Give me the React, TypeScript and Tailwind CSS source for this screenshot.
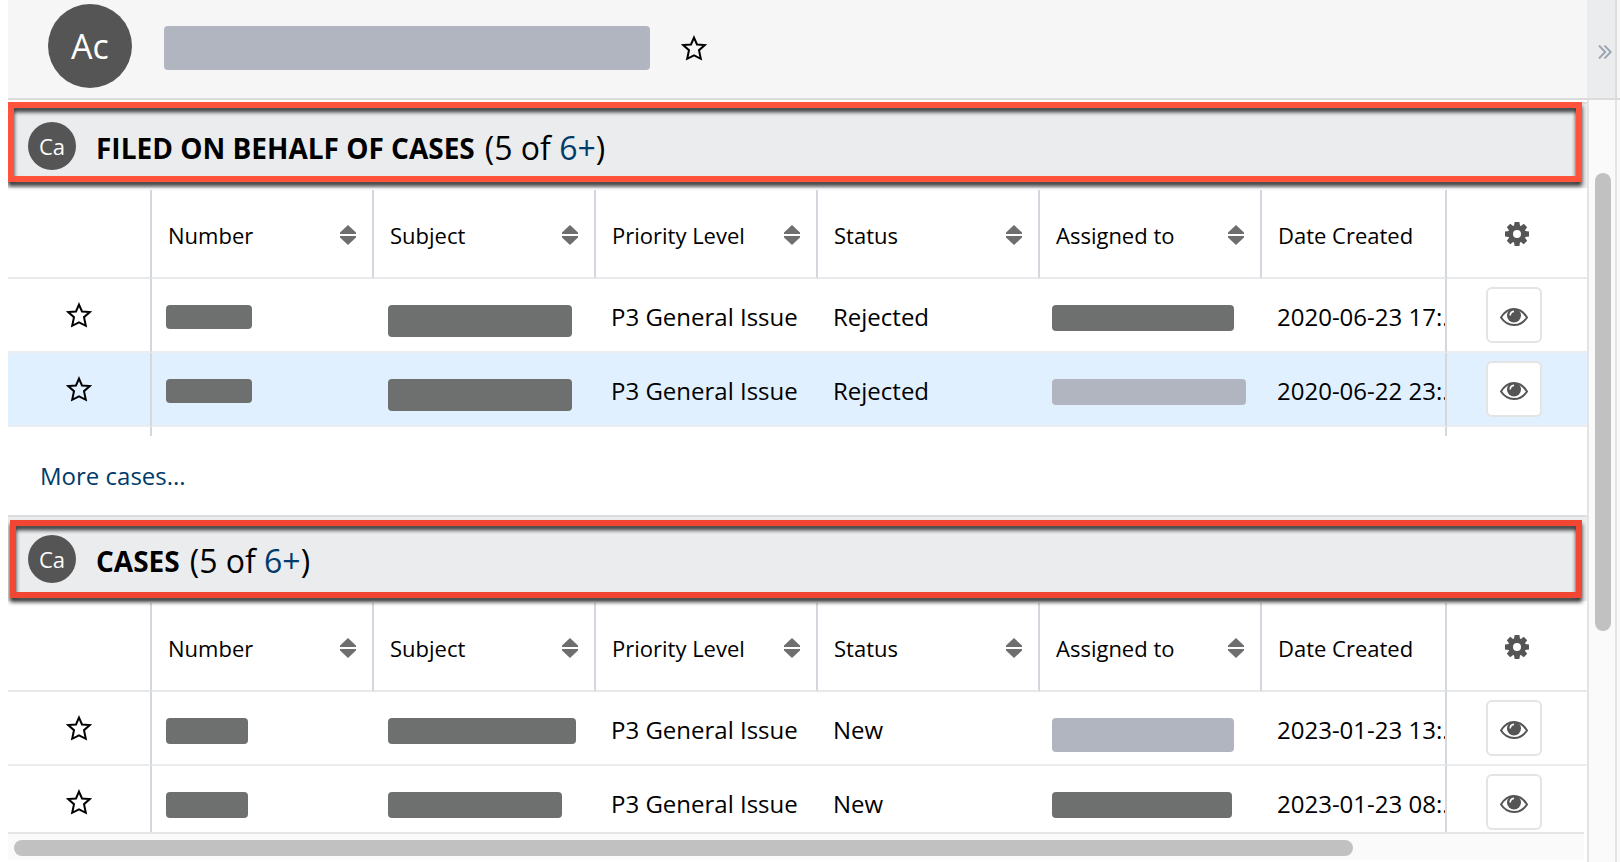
import { useState } from "react";

type Bar = { size: string; light?: boolean };

type CaseRow = {
  id: string;
  number: Bar;
  subject: Bar;
  priority: string;
  status: string;
  assigned: Bar;
  created: string;
  active?: boolean;
};

const filedCases: CaseRow[] = [
  {
    id: "filed-1",
    number: { size: "w-[86px] h-6" },
    subject: { size: "w-[184px] h-8" },
    priority: "P3 General Issue",
    status: "Rejected",
    assigned: { size: "w-[182px] h-[26px]" },
    created: "2020-06-23 17:...",
  },
  {
    id: "filed-2",
    number: { size: "w-[86px] h-6" },
    subject: { size: "w-[184px] h-8" },
    priority: "P3 General Issue",
    status: "Rejected",
    assigned: { size: "w-[194px] h-[26px]", light: true },
    created: "2020-06-22 23:...",
    active: true,
  },
];

const cases: CaseRow[] = [
  {
    id: "case-1",
    number: { size: "w-[82px] h-[26px]" },
    subject: { size: "w-[188px] h-[26px]" },
    priority: "P3 General Issue",
    status: "New",
    assigned: { size: "w-[182px] h-[34px]", light: true },
    created: "2023-01-23 13:...",
  },
  {
    id: "case-2",
    number: { size: "w-[82px] h-[26px]" },
    subject: { size: "w-[174px] h-[26px]" },
    priority: "P3 General Issue",
    status: "New",
    assigned: { size: "w-[180px] h-[26px]" },
    created: "2023-01-23 08:...",
  },
];

const sortableColumns = ["Number", "Subject", "Priority Level", "Status", "Assigned to"];

function Star() {
  return (
    <svg className="h-[26px] w-[26px]" viewBox="0 0 26 26" fill="none" stroke="currentColor" strokeWidth="2">
      <path d="M13 2.6 16 9.5 23.8 10.1 18 15.2 19.8 23.8 13 20.4 6.2 23.8 8 15.2 2.2 10.1 10 9.5Z" />
    </svg>
  );
}

function StarButton() {
  const [on, setOn] = useState(false);
  return (
    <button type="button" aria-label="Favorite" aria-pressed={on} onClick={() => setOn(!on)} className="block">
      <Star />
    </button>
  );
}

function SortIcon() {
  return (
    <svg className="h-5 w-4 shrink-0" viewBox="0 0 16 20" fill="#6e6e6e">
      <path d="M8 0 16 7.5V9H0V7.5Z" />
      <path d="M0 11H16V12.5L8 20 0 12.5Z" />
    </svg>
  );
}

function Gear() {
  return (
    <svg className="h-6 w-6" viewBox="-12 -12 24 24" fill="#555">
      <circle r="6.5" fill="none" stroke="#555" strokeWidth="5" />
      {[0, 45, 90, 135, 180, 225, 270, 315].map((a) => (
        <path key={a} transform={`rotate(${a})`} d="M-3-8 -2.4-12H2.4L3-8Z" />
      ))}
    </svg>
  );
}

function Eye() {
  return (
    <svg className="h-[18px] w-7" viewBox="0 0 28 18">
      <path
        d="M1 9.5C4 4.5 8.5 1 14 1s10 3.5 13 8.5C24 14 19.5 17 14 17S4 14 1 9.5Z"
        fill="none"
        stroke="#555"
        strokeWidth="2"
      />
      <circle cx="14" cy="7.5" r="7" fill="#555" />
      <path d="M10.2 7.6C10.2 5.2 11.8 3.6 14 3.4" fill="none" stroke="#fff" strokeWidth="1.6" />
    </svg>
  );
}

function Redacted({ bar }: { bar: Bar }) {
  return (
    <span className={`block rounded ${bar.size} ${bar.light ? "bg-[#b1b5bf]" : "bg-[#6e706f]"}`} />
  );
}

function EyeButton() {
  return (
    <button
      type="button"
      aria-label="Preview"
      className="flex h-14 w-14 items-center justify-center rounded-md border-2 border-[#e4e4e4] bg-white pt-1"
    >
      <Eye />
    </button>
  );
}

function CaseTable({ rows, partial }: { rows: CaseRow[]; partial?: boolean }) {
  return (
    <table className="mt-[2px] w-full table-fixed border-separate border-spacing-0">
      <colgroup>
        <col className="w-[144px]" />
        <col className="w-[222px]" />
        <col className="w-[222px]" />
        <col className="w-[222px]" />
        <col className="w-[222px]" />
        <col className="w-[222px]" />
        <col />
        <col className="w-[140px]" />
      </colgroup>
      <thead>
        <tr className="h-[89px] text-[22px] leading-8">
          <th className="border-b-2 border-r-2 border-[#e8e9ea] border-r-[#d3d8de] p-0" />
          {sortableColumns.map((name) => (
            <th
              key={name}
              className="border-b-2 border-r-2 border-[#e8e9ea] border-r-[#d3d8de] p-0 pl-4 pr-4 pt-[2px] text-left font-normal"
            >
              <button type="button" className="flex w-full items-center justify-between">
                {name}
                <SortIcon />
              </button>
            </th>
          ))}
          <th className="border-b-2 border-r-2 border-[#e8e9ea] border-r-[#d3d8de] p-0 pl-4 pt-[2px] text-left font-normal">
            Date Created
          </th>
          <th className="border-b-2 border-[#e8e9ea] p-0">
            <button type="button" aria-label="List settings" className="mx-auto block">
              <Gear />
            </button>
          </th>
        </tr>
      </thead>
      <tbody className="text-[24px] leading-8">
        {rows.map((row) => (
          <tr key={row.id} className={`h-[74px] ${row.active ? "bg-[#e0f0fe]" : "bg-white"}`}>
            <td className="border-b-2 border-r-2 border-[#ebeced] border-r-[#d3d8de] p-0">
              <div className="flex justify-center">
                <StarButton />
              </div>
            </td>
            <td className="border-b-2 border-[#ebeced] p-0 pl-[14px] pt-[26px] align-top">
              <Redacted bar={row.number} />
            </td>
            <td className="border-b-2 border-[#ebeced] p-0 pl-[14px] pt-[26px] align-top">
              <Redacted bar={row.subject} />
            </td>
            <td className="border-b-2 border-[#ebeced] p-0 pl-[15px] pt-[3px]">{row.priority}</td>
            <td className="border-b-2 border-[#ebeced] p-0 pl-[15px] pt-[3px]">{row.status}</td>
            <td className="border-b-2 border-[#ebeced] p-0 pl-3 pt-[26px] align-top">
              <Redacted bar={row.assigned} />
            </td>
            <td className="overflow-hidden whitespace-nowrap border-b-2 border-r-2 border-[#ebeced] border-r-[#d3d8de] p-0 pl-[15px] pt-[3px]">
              {row.created}
            </td>
            <td className="border-b-2 border-[#ebeced] p-0 pl-[39px]">
              <EyeButton />
            </td>
          </tr>
        ))}
        {partial && (
          <tr className="h-[74px]">
            <td className="border-r-2 border-[#d3d8de] p-0" />
            <td colSpan={5} className="p-0" />
            <td className="border-r-2 border-[#d3d8de] p-0" />
            <td className="p-0 pl-[39px]">
              <EyeButton />
            </td>
          </tr>
        )}
      </tbody>
    </table>
  );
}

function SectionHeading({ title, frame }: { title: string; frame: string }) {
  return (
    <div className="relative flex h-[86px] items-center border-t-2 border-[#dcdddf] bg-[#ebecee] pl-5">
      <span className="flex h-12 w-12 items-center justify-center rounded-full bg-[#555] text-[22px] leading-8 text-white">
        Ca
      </span>
      <div className="ml-5 flex items-center gap-[10px] pt-1">
        <h2 className="text-[28px] font-bold uppercase leading-10">{title}</h2>
        <p className="text-[32px] leading-10">
          (5 of{" "}
          <a href="#all" className="text-[#003b6b]">
            6+
          </a>
          )
        </p>
      </div>
      {/* highlight frame */}
      <div
        className={`pointer-events-none absolute right-[5px] border-[6px] drop-shadow-[0_4px_2px_rgba(0,0,0,0.8)] ${frame}`}
      />
    </div>
  );
}

export default function App() {
  return (
    <div className="flex h-screen overflow-hidden bg-white pl-2 font-['Open_Sans','Noto_Sans',sans-serif] text-black">
      <div className="flex min-w-0 flex-1 flex-col">
        <header className="flex h-[100px] shrink-0 items-start border-b-2 border-[#dcdcdc] bg-[#f6f6f6] pl-10 pt-1">
          <span className="flex h-[84px] w-[84px] items-center justify-center rounded-full bg-[#555] text-[34px] leading-10 text-white">
            Ac
          </span>
          <div className="ml-8 flex h-[88px] min-w-0 items-center gap-[31px]">
            <span className="h-11 w-[486px] rounded bg-[#b1b5bf]" />
            <StarButton />
          </div>
        </header>

        <main className="min-h-0 flex-1 overflow-hidden pt-[2px]">
          <section>
            <SectionHeading title="Filed on behalf of cases" frame="left-0 -top-[2px] bottom-[6px] border-[#ff533b]" />
            <div className="flow-root h-[248px] overflow-hidden">
              <CaseTable rows={filedCases} partial />
            </div>
            <div className="flex h-[79px] items-center pl-8">
              <a href="#more" className="text-[24px] leading-8 text-[#003b6b]">
                More cases...
              </a>
            </div>
          </section>
          <section>
            <SectionHeading title="Cases" frame="left-[2px] top-[3px] bottom-[3px] border-[#f04632]" />
            <CaseTable rows={cases} />
          </section>
        </main>

        <div className="mb-[2px] mr-[3px] h-7 shrink-0 border-t-2 border-[#e6e6e6] bg-[#fafafa] pl-[6px] pt-[6px]">
          <div className="h-4 w-[85.3%] rounded-full bg-[#c1c1c1]" />
        </div>
      </div>

      <aside className="flex w-[33px] shrink-0 flex-col">
        <div className="flex h-[100px] shrink-0 border-b-2 border-[#dcdcdc] bg-[#f6f6f6]">
          <button
            type="button"
            aria-label="Expand panel"
            className="flex w-[30px] items-center justify-center border-r-2 border-[#dcdcdc] bg-[#ebecee] pl-2 pt-[6px]"
          >
            <svg className="h-[14px] w-[14px]" viewBox="0 0 14 14" fill="none" stroke="#9ba5ae" strokeWidth="1.9">
              <path d="M1 .5 7.200 7 1 13.500M6.500 .5 12.700 7 6.500 13.500" />
            </svg>
          </button>
        </div>
        <div className="flex min-h-0 flex-1 bg-[#fafafa]">
          <div className="w-[30px] border-x-2 border-[#e4e4e4] pl-[6px] pt-[73px]">
            <div className="h-[458px] w-4 rounded-full bg-[#c1c1c1]" />
          </div>
        </div>
      </aside>
    </div>
  );
}
